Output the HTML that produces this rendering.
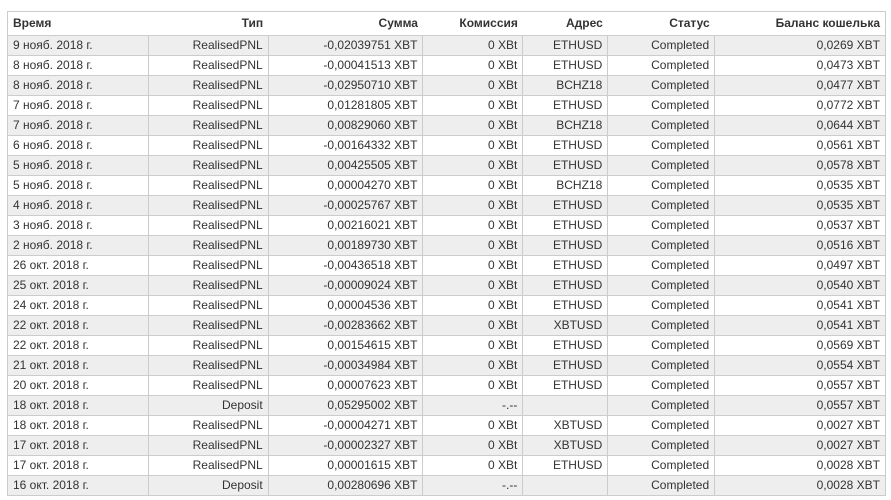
<!DOCTYPE html>
<html><head><meta charset="utf-8"><style>
body{margin:0;background:#fff;font-family:"Liberation Sans","DejaVu Sans",sans-serif;font-size:12px;color:#333;}
table{position:absolute;left:7px;top:11px;border-collapse:collapse;width:879px;}
td,th{border:1px solid #ccc;height:19px;padding:0 5px;text-align:right;white-space:nowrap;line-height:19px;}
th{height:23px;font-weight:bold;color:#333;border-left:none;border-right:none;}
th:first-child{border-left:1px solid #ccc}th:last-child{border-right:1px solid #ccc}
td:first-child,th:first-child{text-align:left}
tr:nth-child(even) td{background:#eee}
</style></head><body>
<table>
<colgroup><col style="width:141px"><col style="width:120px"><col style="width:155px"><col style="width:100px"><col style="width:85px"><col style="width:107px"><col style="width:171px"></colgroup>
<tr><th>Время</th><th>Тип</th><th>Сумма</th><th>Комиссия</th><th>Адрес</th><th>Статус</th><th>Баланс кошелька</th></tr>
<tr><td>9 нояб. 2018 г.</td><td>RealisedPNL</td><td>-0,02039751 XBT</td><td>0 XBt</td><td>ETHUSD</td><td>Completed</td><td>0,0269 XBT</td></tr>
<tr><td>8 нояб. 2018 г.</td><td>RealisedPNL</td><td>-0,00041513 XBT</td><td>0 XBt</td><td>ETHUSD</td><td>Completed</td><td>0,0473 XBT</td></tr>
<tr><td>8 нояб. 2018 г.</td><td>RealisedPNL</td><td>-0,02950710 XBT</td><td>0 XBt</td><td>BCHZ18</td><td>Completed</td><td>0,0477 XBT</td></tr>
<tr><td>7 нояб. 2018 г.</td><td>RealisedPNL</td><td>0,01281805 XBT</td><td>0 XBt</td><td>ETHUSD</td><td>Completed</td><td>0,0772 XBT</td></tr>
<tr><td>7 нояб. 2018 г.</td><td>RealisedPNL</td><td>0,00829060 XBT</td><td>0 XBt</td><td>BCHZ18</td><td>Completed</td><td>0,0644 XBT</td></tr>
<tr><td>6 нояб. 2018 г.</td><td>RealisedPNL</td><td>-0,00164332 XBT</td><td>0 XBt</td><td>ETHUSD</td><td>Completed</td><td>0,0561 XBT</td></tr>
<tr><td>5 нояб. 2018 г.</td><td>RealisedPNL</td><td>0,00425505 XBT</td><td>0 XBt</td><td>ETHUSD</td><td>Completed</td><td>0,0578 XBT</td></tr>
<tr><td>5 нояб. 2018 г.</td><td>RealisedPNL</td><td>0,00004270 XBT</td><td>0 XBt</td><td>BCHZ18</td><td>Completed</td><td>0,0535 XBT</td></tr>
<tr><td>4 нояб. 2018 г.</td><td>RealisedPNL</td><td>-0,00025767 XBT</td><td>0 XBt</td><td>ETHUSD</td><td>Completed</td><td>0,0535 XBT</td></tr>
<tr><td>3 нояб. 2018 г.</td><td>RealisedPNL</td><td>0,00216021 XBT</td><td>0 XBt</td><td>ETHUSD</td><td>Completed</td><td>0,0537 XBT</td></tr>
<tr><td>2 нояб. 2018 г.</td><td>RealisedPNL</td><td>0,00189730 XBT</td><td>0 XBt</td><td>ETHUSD</td><td>Completed</td><td>0,0516 XBT</td></tr>
<tr><td>26 окт. 2018 г.</td><td>RealisedPNL</td><td>-0,00436518 XBT</td><td>0 XBt</td><td>ETHUSD</td><td>Completed</td><td>0,0497 XBT</td></tr>
<tr><td>25 окт. 2018 г.</td><td>RealisedPNL</td><td>-0,00009024 XBT</td><td>0 XBt</td><td>ETHUSD</td><td>Completed</td><td>0,0540 XBT</td></tr>
<tr><td>24 окт. 2018 г.</td><td>RealisedPNL</td><td>0,00004536 XBT</td><td>0 XBt</td><td>ETHUSD</td><td>Completed</td><td>0,0541 XBT</td></tr>
<tr><td>22 окт. 2018 г.</td><td>RealisedPNL</td><td>-0,00283662 XBT</td><td>0 XBt</td><td>XBTUSD</td><td>Completed</td><td>0,0541 XBT</td></tr>
<tr><td>22 окт. 2018 г.</td><td>RealisedPNL</td><td>0,00154615 XBT</td><td>0 XBt</td><td>ETHUSD</td><td>Completed</td><td>0,0569 XBT</td></tr>
<tr><td>21 окт. 2018 г.</td><td>RealisedPNL</td><td>-0,00034984 XBT</td><td>0 XBt</td><td>ETHUSD</td><td>Completed</td><td>0,0554 XBT</td></tr>
<tr><td>20 окт. 2018 г.</td><td>RealisedPNL</td><td>0,00007623 XBT</td><td>0 XBt</td><td>ETHUSD</td><td>Completed</td><td>0,0557 XBT</td></tr>
<tr><td>18 окт. 2018 г.</td><td>Deposit</td><td>0,05295002 XBT</td><td>-.--</td><td></td><td>Completed</td><td>0,0557 XBT</td></tr>
<tr><td>18 окт. 2018 г.</td><td>RealisedPNL</td><td>-0,00004271 XBT</td><td>0 XBt</td><td>XBTUSD</td><td>Completed</td><td>0,0027 XBT</td></tr>
<tr><td>17 окт. 2018 г.</td><td>RealisedPNL</td><td>-0,00002327 XBT</td><td>0 XBt</td><td>XBTUSD</td><td>Completed</td><td>0,0027 XBT</td></tr>
<tr><td>17 окт. 2018 г.</td><td>RealisedPNL</td><td>0,00001615 XBT</td><td>0 XBt</td><td>ETHUSD</td><td>Completed</td><td>0,0028 XBT</td></tr>
<tr><td>16 окт. 2018 г.</td><td>Deposit</td><td>0,00280696 XBT</td><td>-.--</td><td></td><td>Completed</td><td>0,0028 XBT</td></tr>
</table>
</body></html>
